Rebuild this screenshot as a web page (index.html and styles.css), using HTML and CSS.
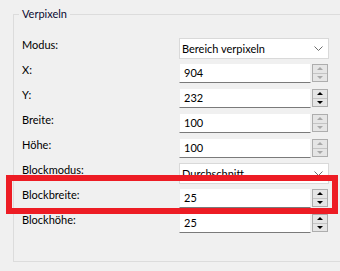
FILE: index.html
```html
<!DOCTYPE html>
<html lang="de">
<head>
  <meta charset="UTF-8" />
  <title>Verpixeln</title>
  <link rel="stylesheet" href="styles.css">
</head>
<body>
  <fieldset class="group">
    <legend>Verpixeln</legend>
    <div class="form">
      <label>Modus:</label>
      <div class="combo"><span>Bereich verpixeln</span>
        <svg class="chev" width="9" height="5" viewBox="0 0 9 5"><path d="M0.5 0.5 L4.5 4.5 L8.5 0.5" fill="none" stroke="#6d6d6d" stroke-width="1"/></svg>
      </div>

      <label>X:</label>
      <div class="spin"><span class="val">904</span><div class="btns light"><span class="up"></span><span class="down"></span></div></div>

      <label>Y:</label>
      <div class="spin"><span class="val">232</span><div class="btns"><span class="up"></span><span class="down"></span></div></div>

      <label>Breite:</label>
      <div class="spin"><span class="val">100</span><div class="btns light"><span class="up"></span><span class="down"></span></div></div>

      <label>Höhe:</label>
      <div class="spin"><span class="val">100</span><div class="btns light"><span class="up"></span><span class="down"></span></div></div>

      <label>Blockmodus:</label>
      <div class="combo"><span>Durchschnitt</span>
        <svg class="chev" width="9" height="5" viewBox="0 0 9 5"><path d="M0.5 0.5 L4.5 4.5 L8.5 0.5" fill="none" stroke="#6d6d6d" stroke-width="1"/></svg>
      </div>

      <label>Blockbreite:</label>
      <div class="spin"><span class="val">25</span><div class="btns"><span class="up"></span><span class="down"></span></div></div>

      <label>Blockhöhe:</label>
      <div class="spin"><span class="val">25</span><div class="btns"><span class="up"></span><span class="down"></span></div></div>
    </div>
  </fieldset>

  <div class="highlight"></div>
</body>
</html>
```

FILE: styles.css
```css
html, body {
  margin: 0;
  padding: 0;
}
body {
  width: 340px;
  height: 271px;
  overflow: hidden;
  background: #f0f0f0;
  font-family: Lato, "Noto Sans", sans-serif;
  font-size: 11px;
  color: #000;
  padding-top: 7px;
  box-sizing: border-box;
  position: relative;
}
.group {
  margin: 0 0 0 13px;
  width: 327px;
  border: 1px solid #dcdcdc;
  border-right: none;
  padding: 17px 0 23px 8px;
  box-sizing: border-box;
}
.group legend {
  padding: 0 3px;
  margin-left: -3px;
  line-height: 14px;
  color: #0a0a30;
}
.form {
  display: grid;
  grid-template-columns: 157px 150px;
  grid-auto-rows: 25px;
}
.form label {
  line-height: 15px;
  align-self: start;
  margin-top: -1px;
}
.combo {
  height: 21px;
  box-sizing: border-box;
  background: #fff;
  border: 1px solid #d9d9d9;
  display: flex;
  align-items: center;
  justify-content: space-between;
  padding: 0 4px 0 2px;
}
.combo span {
  line-height: 17px;
}
.chev {
  margin-right: 1px;
}
.spin {
  height: 20px;
  display: flex;
  align-items: center;
  gap: 1px;
  padding-right: 1px;
}
.val {
  flex: 1;
  height: 20px;
  box-sizing: border-box;
  background: #fff;
  border: 1px solid #f0f0f0;
  border-bottom-color: #7a7a7a;
  padding-left: 4px;
  line-height: 18px;
}
.btns {
  width: 16px;
  height: 18px;
  box-sizing: border-box;
  border: 1px solid #adadad;
  background: #e5e5e5;
  display: flex;
  flex-direction: column;
}
.btns span {
  flex: 1;
  display: flex;
  align-items: center;
  justify-content: center;
}
.btns .up {
  border-bottom: 1px solid #c4c4c4;
}
.btns .up::before,
.btns .down::before {
  content: "";
  width: 0;
  height: 0;
  border-left: 3px solid transparent;
  border-right: 3px solid transparent;
}
.btns .up::before {
  border-bottom: 3px solid #000;
}
.btns .down::before {
  border-top: 3px solid #000;
}
.btns.light .up::before {
  border-bottom-color: #a8a8a8;
}
.btns.light .down::before {
  border-top-color: #a8a8a8;
}
.highlight {
  position: absolute;
  left: 6px;
  top: 175px;
  width: 332px;
  height: 39px;
  box-sizing: border-box;
  border: 6px solid #ed1c24;
}
```
